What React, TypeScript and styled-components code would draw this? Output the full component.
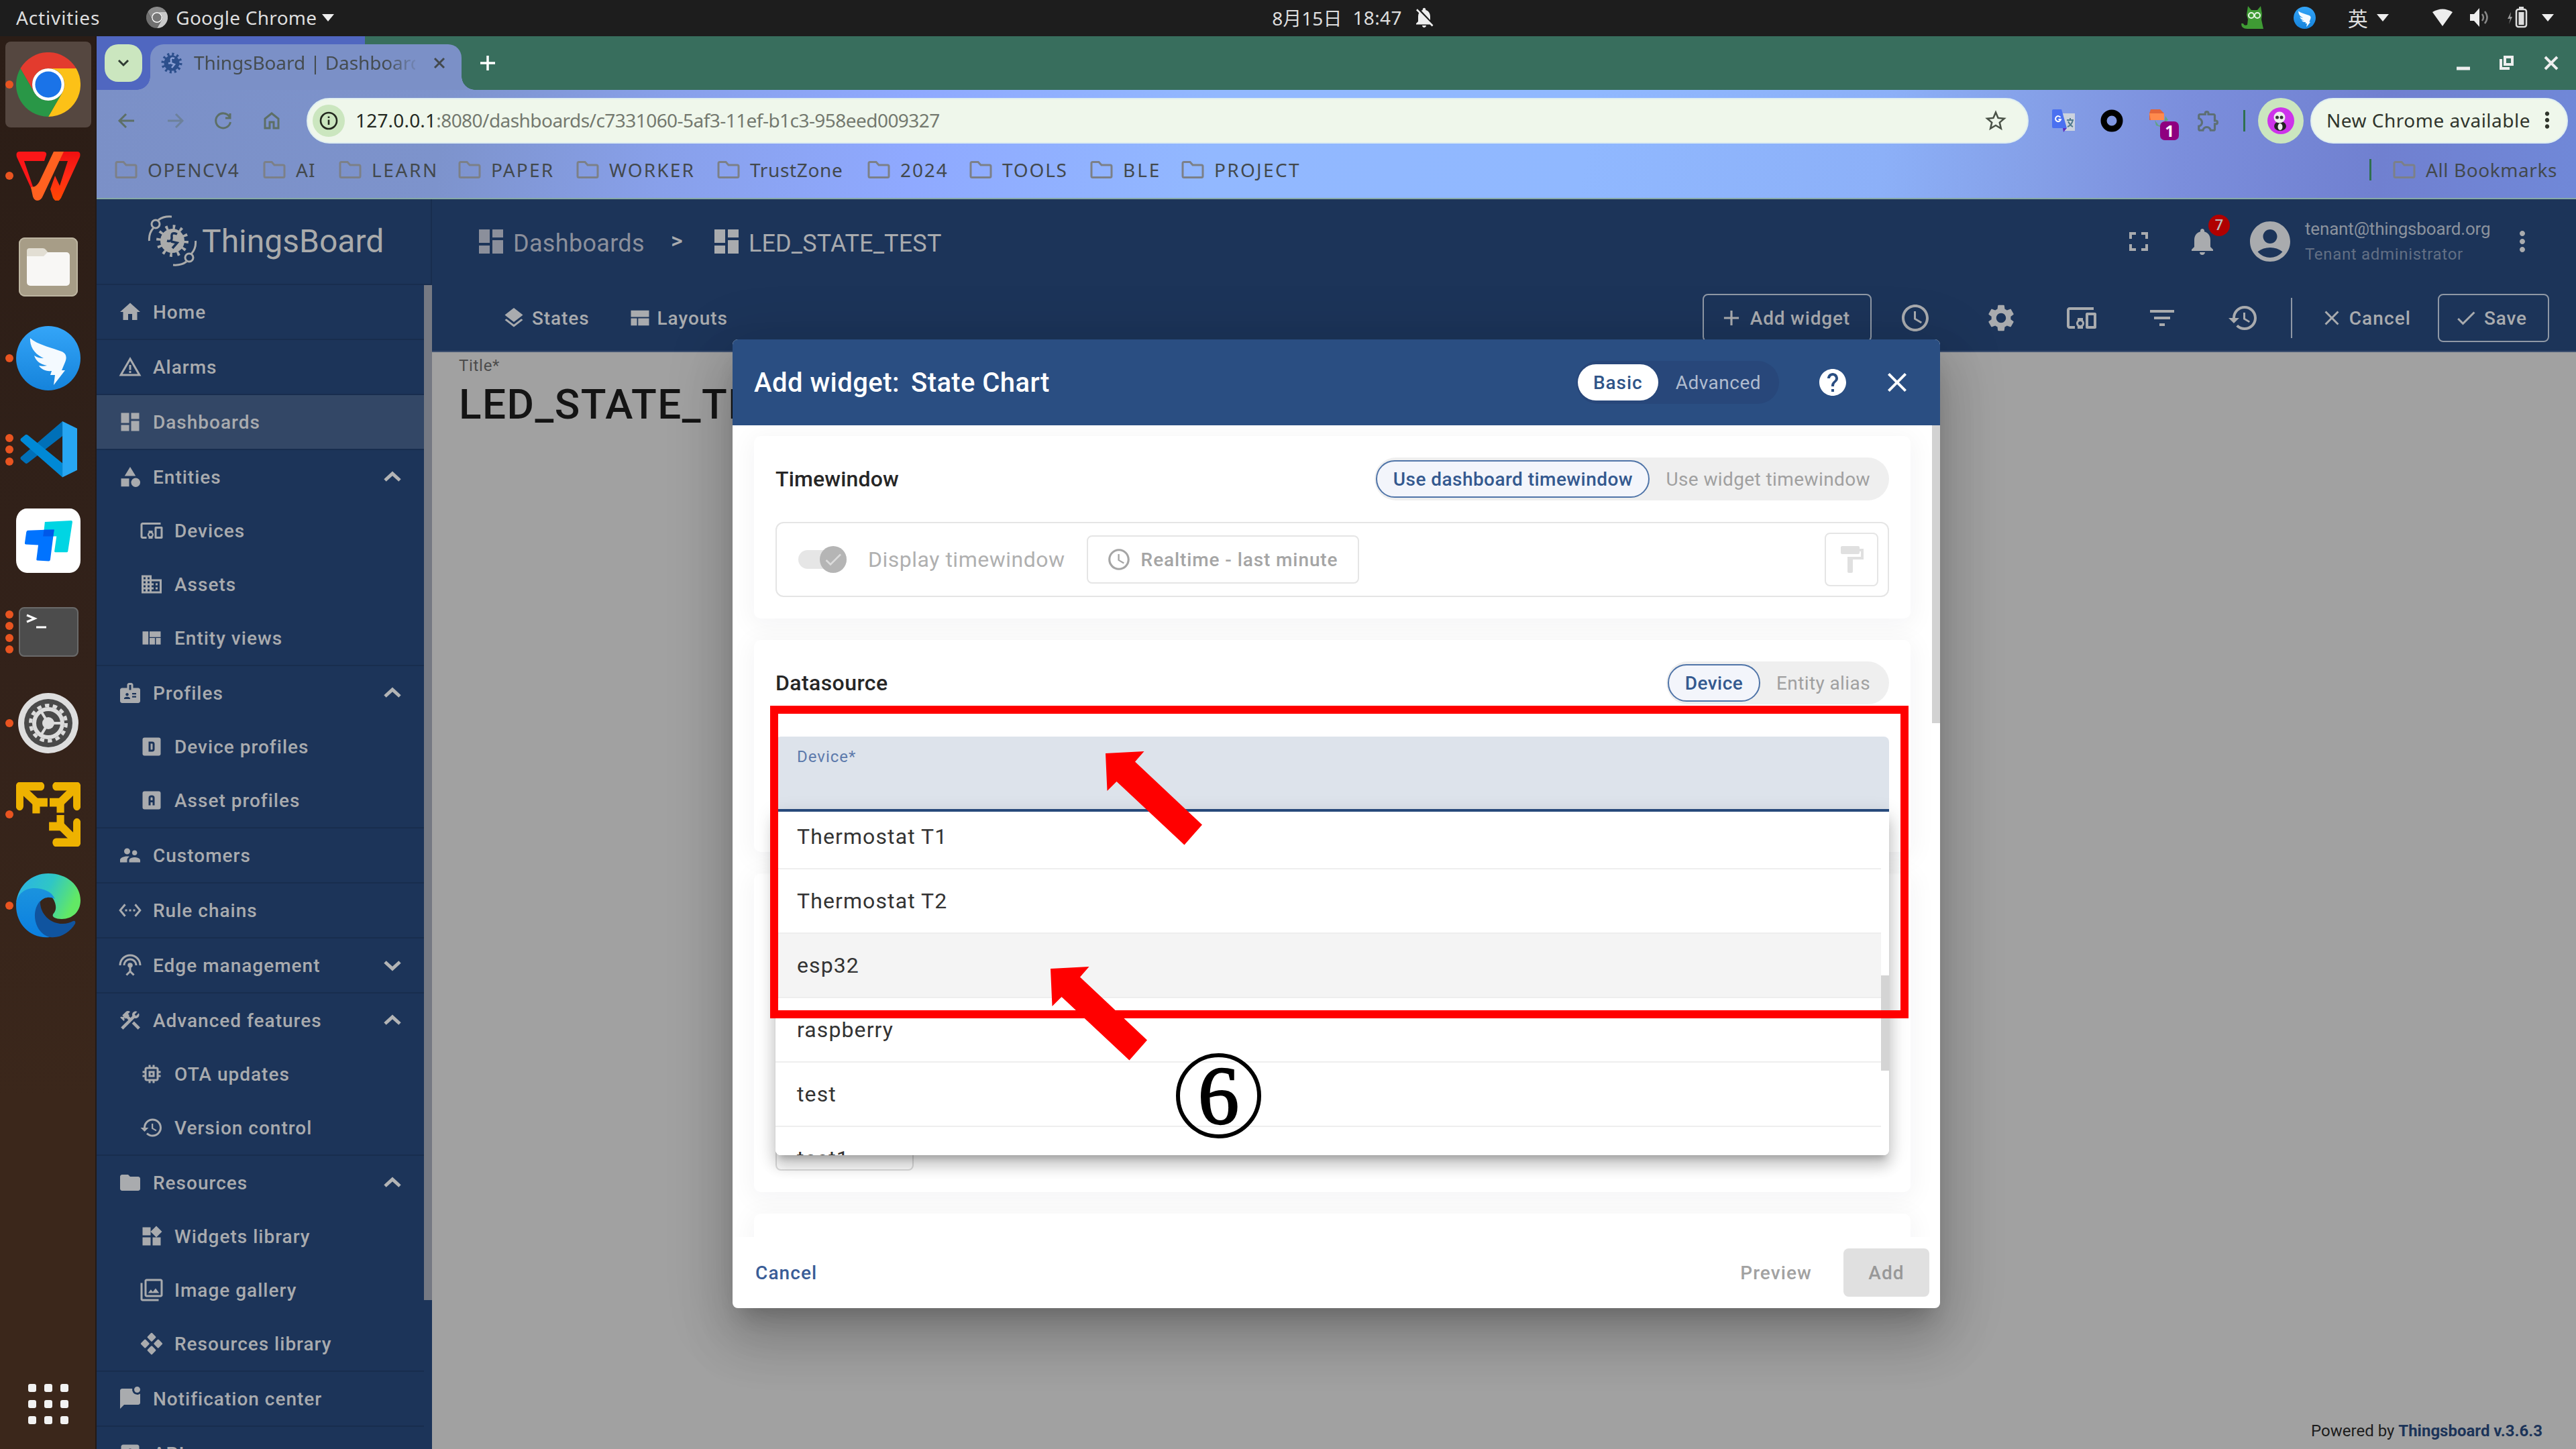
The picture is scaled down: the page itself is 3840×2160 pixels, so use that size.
import React from 'react';
import styled, { createGlobalStyle, css } from 'styled-components';
import {
  MdAccessTime, MdAccountCircle, MdAdd, MdBadge, MdCategory, MdCheck, MdClose, MdConstruction, MdDashboard,
  MdDevicesOther, MdDomain, MdFilter, MdFilterList, MdFolder, MdFormatPaint,
  MdFullscreen, MdHelp, MdHistory, MdHome, MdInsertChart, MdLayers, MdMarkChatUnread, MdMemory, MdMoreVert,
  MdNotifications, MdSettings, MdSettingsEthernet, MdSettingsInputAntenna, MdStarBorder, MdSupervisorAccount,
  MdWarningAmber, MdWidgets, MdOutlineExtension, MdNotificationsOff,
} from 'react-icons/md';

const GlobalStyle = createGlobalStyle`
  * { box-sizing: border-box; }
  html, body { margin: 0; padding: 0; }
  body { width: 3840px; height: 2160px; overflow: hidden; font-family: Roboto, "Noto Sans CJK SC", sans-serif; }
  svg { display: block; flex: none; }
`;

const chromeFont = css`font-family: "Noto Sans", "Noto Sans CJK SC", sans-serif; font-size: 28px;`;

const Screen = styled.div`
  position: relative; width: 3840px; height: 2160px; overflow: hidden;
  display: flex; flex-direction: column; background: #1d1d1d;
`;
const Text = styled.span<{ $ls?: number }>`white-space: pre; letter-spacing: ${p => p.$ls ?? 0}px;`;
const Space = styled.div<{ $w: number }>`width: ${p => p.$w}px; flex: none;`;
const Fill = styled.div`flex: 1;`;

/* ---------- system bar ---------- */
const SystemBar = styled.header`
  height: 54px; flex: none; display: flex; align-items: center; padding: 0 20px 2px 24px;
  background: #1d1d1d; color: #dedede; ${chromeFont}
`;
const InputMethod = styled.span`font-size: 30px;`;
const Caret = styled.i`
  border: 9px solid transparent; border-top: 11px solid #eee; border-bottom: 0; width: 0; height: 0; flex: none;
`;
const Desktop = styled.div`flex: 1; min-height: 0; display: flex;`;

/* ---------- dock ---------- */
const Dock = styled.nav`
  width: 144px; flex: none; padding: 4px 0 0; display: flex; flex-direction: column;
  background: linear-gradient(#2b1d16, #33221a 45%, #3b271b 75%, #3b271b); border-right: 2px solid #231a17;
`;
const DockSlot = styled.div<{ $active?: boolean }>`
  position: relative; height: 128px; margin: 4px 6px 4px 8px; border-radius: 8px;
  display: flex; align-items: center; justify-content: center;
  background: ${p => (p.$active ? '#554740' : 'transparent')};
`;
const DockDots = styled.div`
  position: absolute; left: 0; top: 0; bottom: 0; width: 12px;
  display: flex; flex-direction: column; justify-content: center; gap: 5.5px;
`;
const DockDot = styled.i`width: 12px; height: 12px; border-radius: 50%; background: #e95420;`;
const AppGrid = styled.div`
  margin: auto auto 37px 42px; display: grid; grid-template-columns: repeat(3, 12px); gap: 12px;
`;
const AppCell = styled.i`width: 12px; height: 12px; border-radius: 3px; background: #f2f2f2;`;

/* ---------- browser ---------- */
const Browser = styled.div`flex: 1; min-width: 0; display: flex; flex-direction: column;`;
const TabStrip = styled.div`
  height: 80px; flex: none; display: flex; align-items: flex-start; padding: 12px 26px 0 12px;
  background: linear-gradient(90deg, #5067c0 400px, #386e5d 400px); color: #454c50; ${chromeFont}
`;
const TabSearch = styled.div`
  width: 56px; height: 56px; border-radius: 20px; background: #cbe6bf; margin-right: 12px;
  display: flex; align-items: center; justify-content: center;
`;
const Tab = styled.div`
  position: relative; width: 464px; height: 68px; border-radius: 20px 20px 0 0; background: #7b90c7;
  display: flex; align-items: center; padding: 0 19px 12px 15px;
  &::before, &::after {
    content: ''; position: absolute; bottom: 0; width: 20px; height: 20px;
    background: radial-gradient(circle at 0 0, transparent 19.5px, #7b90c7 20px);
  }
  &::before { right: 100%; }
  &::after { left: 100%; transform: scaleX(-1); }
`;
const TabTitle = styled.div`
  width: 338px; margin: -2px 0 0 16px; overflow: hidden; white-space: nowrap; letter-spacing: -.1px;
  mask-image: linear-gradient(90deg, #000 285px, transparent 338px);
`;
const WindowButtons = styled.div`
  margin-left: auto; height: 56px; display: flex; align-items: center; gap: 44px;
`;
const BrowserChrome = styled.div`
  height: 163px; flex: none; border-bottom: 2px solid #86a9a6; color: #43494d; ${chromeFont}
  background: linear-gradient(96deg, #7b90c7 0, #7d93cc 14%, #88a0ea 23%, #8fa9ff 33%, #92b8ff 45%, #90b8ff 60%,
    #8cb0f8 72%, #85a0e8 78%, #7b8edc 84%, #7080d0 92%, #7088d8 100%);
`;
const AddressRow = styled.div`height: 92px; display: flex; align-items: center; padding: 0 12px 0 26px;`;
const NavButton = styled.div<{ $dim?: boolean }>`
  width: 72px; display: flex; padding-left: 5px; opacity: ${p => (p.$dim ? 0.45 : 1)};
`;
const Omnibox = styled.div`
  flex: 1; height: 68px; border-radius: 34px; background: #eff7eb; border: 2px solid #dfeef0; margin-left: -1px;
  display: flex; align-items: center; padding: 0 28px 0 7px; color: #74796f; white-space: pre;
`;
const Url = styled.div`padding-bottom: 2px;`;
const InfoBadge = styled.div`
  width: 48px; height: 48px; border-radius: 50%; background: #cbe6bf; margin-right: 16px;
  display: flex; align-items: center; justify-content: center;
`;
const Host = styled.b`font-weight: 400; color: #23281f; letter-spacing: .18px;`;
const ExtSlot = styled.div`
  position: relative; width: 72px; display: flex; align-items: center; justify-content: center;
`;
const ExtBadge = styled.span`
  position: absolute; left: 36px; top: 18px; width: 28px; height: 28px; border-radius: 7px; background: #8f0080;
  color: #fff; font: 700 24px/28px "Noto Sans", sans-serif; text-align: center;
`;
const Rule = styled.i<{ $h: number; $c: string; $w?: number }>`
  width: ${p => p.$w ?? 3}px; height: ${p => p.$h}px; background: ${p => p.$c}; flex: none;
`;
const Avatar = styled.div`
  width: 68px; height: 68px; border-radius: 50%; background: #cbe6bf; margin: 0 10px 0 19px;
  display: flex; align-items: center; justify-content: center;
`;
const UpdatePill = styled.div`
  width: 384px; height: 68px; border-radius: 34px; background: #eff7eb; border: 2px solid #dfeef0; color: #30352c;
  display: flex; align-items: center; padding: 0 0 2px 22px;
`;
const BookmarkRow = styled.div`height: 56px; display: flex; align-items: center; padding: 0 28px 2px 27px;`;
const Bookmark = styled.div<{ $w?: number }>`
  width: ${p => (p.$w ? p.$w + 'px' : 'auto')}; display: flex; align-items: center; gap: 15px;
`;

/* ---------- ThingsBoard page ---------- */
const Page = styled.div`flex: 1; min-height: 0; display: flex; background: #1c3459; color: #a9abae;`;
const Sidebar = styled.aside`width: 500px; flex: none; display: flex; flex-direction: column;`;
const Brand = styled.div`
  height: 128px; flex: none; display: flex; align-items: center; padding: 0 0 2px 76px;
  border-bottom: 2px solid #182d4e; border-right: 2px solid #182d4e; font-size: 48px; color: #aaabab;
`;
const MenuScroll = styled.div`flex: 1; min-height: 0; overflow: hidden; display: flex;`;
const Menu = styled.ul`list-style: none; margin: 0; padding: 0; width: 488px;`;
const ScrollThumb = styled.i<{ $h: number; $c: string }>`width: 12px; height: ${p => p.$h}px; background: ${p => p.$c};`;
const MenuSection = styled.li<{ $active?: boolean }>`
  border-bottom: 2px solid #182d4e; background: ${p => (p.$active ? '#334766' : 'transparent')};
`;
const MenuRow = styled.div<{ $sub?: boolean }>`
  height: 80px; display: flex; align-items: center; padding: 0 34px 0 ${p => (p.$sub ? 64 : 32)}px;
  font-size: 28px; font-weight: 500; letter-spacing: 1px; white-space: pre;
  > span { margin-left: 16px; flex: 1; }
`;

const Main = styled.main`flex: 1; min-width: 0; display: flex; flex-direction: column; background: #a1a1a1;`;
const TopRow = styled.div`
  height: 128px; flex: none; background: #1c3459; display: flex; align-items: center; padding: 0 56px 2px 64px;
`;
const Crumb = styled.div<{ $dim?: boolean }>`
  display: flex; align-items: center; font-size: 36px; color: ${p => (p.$dim ? '#8b8f9b' : '#a9abae')};
  > span { padding-top: 5px; margin-left: 9px; }
`;
const CrumbArrow = styled.span`width: 98px; padding: 0 0 5px 39px; font-size: 34px; font-weight: 500;`;
const BellWrap = styled.div`position: relative; margin: 0 41px 0 47px;`;
const BellBadge = styled.span`
  position: absolute; left: 33px; top: -16px; width: 32px; height: 32px; border-radius: 50%; background: #b00000;
  font-size: 22px; font-weight: 500; line-height: 32px; text-align: center; color: #bbb;
`;
const Account = styled.div`
  width: 300px; margin-left: 16px; display: flex; flex-direction: column; gap: 8px; line-height: 30px; white-space: nowrap;
`;
const AccountMail = styled.span`font-size: 26px; letter-spacing: -.17px; color: #8b929d;`;
const AccountRole = styled.span`font-size: 24px; letter-spacing: .68px; color: #626f84;`;
const ToolRow = styled.div`
  height: 100px; flex: none; background: #1c3459; border-bottom: 2px solid #3d506f; padding: 0 40px 0 104px;
  display: flex; align-items: center; font-size: 28px; font-weight: 500;
`;
const OutlineButton = styled.div<{ $w: number }>`
  width: ${p => p.$w}px; height: 72px; border: 2px solid #8f98a5; border-radius: 8px;
  display: flex; align-items: center; padding-left: 22px; gap: 9px;
`;
const ToolIcon = styled.div<{ $l: number }>`margin-left: ${p => p.$l}px;`;
const Workspace = styled.section`flex: 1; display: flex; flex-direction: column; padding: 6px 50px 11px 40px;`;
const FieldLabel = styled.div`font-size: 24px; line-height: 28px; letter-spacing: .7px; color: #4c4c4c;`;
const DashTitle = styled.div`
  margin-top: 4px; font-size: 62px; font-weight: 500; line-height: 80px; letter-spacing: 1.5px; color: #141414;
`;
const Powered = styled.div`
  margin: auto 0 0 auto; font-size: 24px; line-height: 32px; color: #1c1c1c;
  b { color: #1c3459; }
`;

/* ---------- dialog ---------- */
const Dialog = styled.section`
  position: absolute; isolation: isolate; left: 1092px; top: 506px; width: 1800px; height: 1444px; border-radius: 8px;
  background: #fff; display: flex; flex-direction: column;
  box-shadow: 0 22px 30px -14px rgba(0,0,0,.2), 0 48px 76px 6px rgba(0,0,0,.14), 0 18px 92px 16px rgba(0,0,0,.12);
`;
const DialogHead = styled.div`
  height: 128px; flex: none; background: #2a4e82; border-radius: 8px 8px 0 0; color: #fff;
  display: flex; align-items: center; padding: 0 40px 0 32px; font-size: 40px; font-weight: 500;
`;
const ModeToggle = styled.div`
  margin-left: auto; height: 64px; border-radius: 32px; background: #28477a; padding: 0 27px 0 2px;
  display: flex; align-items: center; font-size: 28px; color: #b0bccf; font-weight: 400;
`;
const ModePill = styled.div`
  width: 120px; height: 54px; border-radius: 27px; background: #fff; color: #2f5488; font-weight: 500;
  display: flex; align-items: center; justify-content: center; margin-right: 26px;
`;
const DialogBody = styled.div`flex: 1; min-height: 0; overflow: hidden; display: flex;`;
const Panels = styled.div`width: 1788px; padding: 16px 32px; display: flex; flex-direction: column; gap: 32px;`;
const Panel = styled.div<{ $h: number; $z?: number; $end?: boolean }>`
  position: relative; z-index: ${p => p.$z ?? 0}; height: ${p => p.$h}px; flex: none; padding: 32px; border-radius: 10px;
  background: #fff; display: flex; flex-direction: column; justify-content: ${p => (p.$end ? 'flex-end' : 'flex-start')};
  box-shadow: 0 6px 36px 6px rgba(20, 24, 50, .045);
`;
const PanelHead = styled.div`
  height: 64px; flex: none; display: flex; align-items: center; justify-content: space-between;
  font-size: 32px; font-weight: 500; color: #262626;
`;
const Toggle = styled.div`
  height: 64px; border-radius: 32px; background: #efefef; display: flex; align-items: center; padding: 0 28px 0 2px;
  font-size: 28px; font-weight: 400; letter-spacing: .4px; color: #a0a0a0; white-space: pre;
`;
const TogglePill = styled.div<{ $w: number }>`
  width: ${p => p.$w}px; height: 56px; border-radius: 28px; border: 2px solid #4f74a8; background: #f3f5fb; color: #34598f;
  font-weight: 500; letter-spacing: .45px; display: flex; align-items: center; justify-content: center; margin-right: 24px;
`;
const TimeBox = styled.div`
  height: 112px; margin-top: 32px; border: 2px solid #e5e5e5; border-radius: 12px; display: flex; align-items: center;
  padding: 0 14px 0 32px; font-size: 32px; color: #b0b0b0;
`;
const SwitchTrack = styled.div`
  width: 72px; height: 28px; border-radius: 14px; background: #e6e6e6; display: flex; align-items: center;
  justify-content: flex-end; margin-right: 32px;
`;
const SwitchKnob = styled.div`
  width: 40px; height: 40px; border-radius: 50%; background: #b5b5b5; color: #dcdcdc; flex: none;
  display: flex; align-items: center; justify-content: center;
`;
const RealtimeButton = styled.div`
  width: 406px; height: 72px; margin-left: 32px; border: 2px solid #e5e5e5; border-radius: 8px; color: #a5a5a5;
  font-size: 28px; font-weight: 500; display: flex; align-items: center; padding-left: 27px; gap: 14px;
`;
const PaintButton = styled.div`
  width: 80px; height: 80px; margin-left: auto; border: 2px solid #e5e5e5; border-radius: 8px; color: #e0e0e0;
  display: flex; align-items: center; justify-content: center;
`;
const DeviceField = styled.div`
  position: relative; height: 112px; margin-top: 48px; flex: none; border-radius: 8px 8px 0 0;
  border-bottom: 4px solid #2a4e82; background: #dde3eb;
  padding: 16px 32px; font-size: 24px; line-height: 28px; letter-spacing: 1px; color: #5c7aac;
`;
const OptionShadow = styled.div`
  position: absolute; left: 0; top: 112px; width: 1660px; height: 512px; border-radius: 0 0 8px 8px;
  box-shadow: 0 10px 10px -6px rgba(0,0,0,.2), 0 16px 20px 2px rgba(0,0,0,.14), 0 6px 28px 4px rgba(0,0,0,.12);
`;
const OptionPanel = styled.div`
  position: absolute; left: 0; top: 112px; width: 1660px; height: 512px; overflow: hidden; background: #fff;
  border-radius: 0 0 8px 8px; display: flex;
`;
const Options = styled.div`width: 1648px; margin-top: -10px;`;
const Option = styled.div<{ $hover?: boolean }>`
  height: 96px; border-bottom: 2px solid #eee; background: ${p => (p.$hover ? '#f4f4f4' : '#fff')};
  display: flex; align-items: center; padding-left: 32px; font-size: 32px; letter-spacing: 1.1px; color: #333;
`;
const OptionThumb = styled.i`width: 12px; height: 142px; margin-top: 244px; background: #d4d4d4;`;
const GhostButton = styled.div`width: 206px; height: 72px; border: 2px solid #dcdcdc; border-radius: 8px;`;
const DialogFoot = styled.div`
  height: 106px; flex: none; padding: 0 16px 0 34px; display: flex; align-items: center;
  font-size: 28px; font-weight: 500; letter-spacing: 1.1px; color: #a2a2a2;
`;
const CancelLink = styled.span`color: #3a5d97; margin-right: auto;`;
const AddButton = styled.div`
  width: 128px; height: 72px; margin-left: 47px; border-radius: 8px; background: #e0e0e0; color: #989898;
  display: flex; align-items: center; justify-content: center;
`;

/* ---------- annotations ---------- */
const RedFrame = styled.div`
  position: absolute; left: 1148px; top: 1052px; width: 1697px; height: 466px; border: 12px solid #f00;
`;
const Arrow = styled.svg<{ $x: number; $y: number }>`position: absolute; left: ${p => p.$x}px; top: ${p => p.$y}px;`;
const StepMark = styled.div`
  position: absolute; left: 1753px; top: 1570px; width: 127px; height: 127px; border: 6px solid #000; border-radius: 50%;
  display: flex; align-items: center; justify-content: center; color: #000;
  font: 122px/127px "Liberation Serif", serif; -webkit-text-stroke: 2.5px #000;
`;

/* ---------- drawn icons ---------- */
const Bird = ({ size }: { size: number }) => (
  <svg width={size} height={size} viewBox="0 0 96 96">
    <defs><linearGradient id="bird" x1="0" y1="0" x2="0" y2="1"><stop stopColor="#34a5f8" /><stop offset="1" stopColor="#1583db" /></linearGradient></defs>
    <circle cx="48" cy="48" r="48" fill="url(#bird)" />
    <path d="M21 18C32 28 50 31 68 38c7 3 8 9 5 16l-5 12h5L56 88l2-15h-7l2-6c-9 1-16-3-19-8 4 1 8 1 12 0-11-2-17-8-19-15 5 3 9 4 14 4C30 43 20 33 21 18z" fill="#f4faff" />
  </svg>
);
const ChromeLogo = ({ size, mono }: { size: number; mono?: boolean }) => (
  <svg width={size} height={size} viewBox="0 0 48 48">
    <path d="M24 12H44.8A24 24 0 0 0 3.2 12L13.6 30A12 12 0 0 1 24 12" fill={mono ? '#8a8a8a' : '#e33b2e'} />
    <path d="M44.8 12A24 24 0 0 1 24 48L34.4 30A12 12 0 0 0 24 12Z" fill={mono ? '#c9c9c9' : '#fcc117'} />
    <path d="M24 48A24 24 0 0 1 3.2 12L13.6 30A12 12 0 0 0 34.4 30Z" fill={mono ? '#707070' : '#299747'} />
    <circle cx="24" cy="24" r="12" fill="#fff" /><circle cx="24" cy="24" r="9.8" fill={mono ? '#777' : '#1a73e8'} />
  </svg>
);
const WpsLogo = () => (
  <svg width="96" height="74" viewBox="24 227 96 74">
    <defs><linearGradient id="wps" x1="0" y1="0" x2="0" y2="1"><stop stopColor="#f00f10" /><stop offset=".5" stopColor="#ff2a16" /><stop offset="1" stopColor="#ff4a00" /></linearGradient></defs>
    <path d="M29 228H64q6 0 5 5l-3 9H36l15 44 3-6 3 17q-3 3-5-2L25 236q-2-8 4-8z" fill="#fa1618" />
    <path d="M115 228H92l-4 14h13L89 279l-7-15-7 20 4 13q3 5 6 5t6-5l28-61q2-8-4-8z" fill="url(#wps)" />
    <path d="M80 228h15L64 294q-3 7-8 7t-7-6l-3-14 6-1q5-3 8-10z" fill="#ff6120" />
  </svg>
);
const FilesLogo = () => (
  <svg width="88" height="88" viewBox="0 0 88 88">
    <rect width="88" height="88" rx="9" fill="#a79d87" /><rect x="1" y="1" width="86" height="86" rx="8" fill="none" stroke="#bdb5a1" strokeWidth="2" />
    <path d="M12 20q0-4 4-4h20q3 0 5 3l3 4h28v14H12z" fill="#e2ded3" />
    <rect x="12" y="22" width="64" height="50" rx="5" fill="#f8f7f5" /><path d="M12 22h31l-6 6H12z" fill="#e2ded3" />
  </svg>
);
const VsCodeLogo = () => (
  <svg width="85" height="84" viewBox="66 133 190 165" preserveAspectRatio="none">
    <path d="M207 133V176L92 255q-6 4-10 0l-13-10q-4-4 0-8z" fill="#0070b8" />
    <path d="M207 297V256L92 174q-6-4-10 0l-13 9q-4 4 0 8z" fill="#0089d6" />
    <path d="M207 133L256 154V276L207 297z" fill="#27a6f2" />
  </svg>
);
const ToDeskLogo = () => (
  <svg width="96" height="96" viewBox="54 388 215 187" preserveAspectRatio="none">
    <rect x="54" y="388" width="215" height="187" rx="36" fill="#fff" />
    <path d="M150 427l88-4q4 0 4 4l-15 85q-1 3-4 3h-38q-4 0-3-4l7-42h-44z" fill="#00d5e3" />
    <path d="M93 452l88-3-13 88q-1 4-5 4l-38-2q-4 0-3-4l6-41-42-2q-4 0-3-4l5-31q1-5 5-5z" fill="#0073ff" />
    <path d="M147 450h34l-3 19h-34z" fill="#0058e8" />
  </svg>
);
const TerminalLogo = () => (
  <svg width="89" height="74" viewBox="0 0 89 74">
    <rect x="1" y="1" width="87" height="72" rx="7" fill="#4c4c4c" stroke="#6a6a6a" strokeWidth="2" />
    <path d="M12 12l12 5-12 5M26 30h15" fill="none" stroke="#fff" strokeWidth="3" />
  </svg>
);
const SettingsLogo = () => (
  <svg width="90" height="90" viewBox="0 0 90 90">
    <circle cx="45" cy="45" r="45" fill="#dedede" /><circle cx="45" cy="45" r="36" fill="#4a4a4a" />
    <circle cx="45" cy="45" r="21" fill="none" stroke="#dcdcdc" strokeWidth="6" />
    <circle cx="45" cy="45" r="26.5" fill="none" stroke="#dcdcdc" strokeWidth="5" strokeDasharray="6.5 5.4" />
    <circle cx="45" cy="45" r="9" fill="#dcdcdc" /><path d="M45 45H68M45 45L34 27M45 45L34 63" stroke="#dcdcdc" strokeWidth="4" />
  </svg>
);
const VmwareLogo = () => (
  <svg width="96" height="96" viewBox="54 1188 215 188" preserveAspectRatio="none">
    <g fill="none" stroke="#eeb200" strokeWidth="25" strokeLinejoin="round">
      <g strokeLinecap="round"><path d="M66 1258V1200H136" /><path d="M188 1200H257V1258" /><path d="M257 1306V1364H188" /></g>
      <path d="M74 1208L120 1246" /><path d="M250 1206L203 1246" /><path d="M250 1356L204 1316" />
      <path d="M121 1279V1247H159" /><path d="M166 1247H202V1277" /><path d="M202 1284V1317H164" />
    </g>
  </svg>
);
const EdgeLogo = () => (
  <svg width="96" height="96" viewBox="0 0 96 96">
    <defs>
      <linearGradient id="edgeTop" x1="0" y1="0" x2="1" y2=".35"><stop stopColor="#2ab0ea" /><stop offset=".55" stopColor="#2fc6c6" /><stop offset="1" stopColor="#62e865" /></linearGradient>
      <linearGradient id="edgeLeft" x1="0" y1="0" x2="0" y2="1"><stop stopColor="#1b93de" /><stop offset="1" stopColor="#0b7fe0" /></linearGradient>
    </defs>
    <path d="M0 44C3 18 23 0 48 0c28 0 48 18 48 40 0 17-12 28-28 28-9 0-15-3-13-7 2-3 5-6 4-13C57 32 40 24 28 24 14 24 4 32 0 44z" fill="url(#edgeTop)" />
    <path d="M0 48c0-16 12-26 27-26 14 0 26 5 31 16-7-4-17-3-22 4-10 15-4 38 14 53-27 3-50-18-50-47z" fill="url(#edgeLeft)" />
    <path d="M28 60c1-9 4-15 8-19-1 18 14 34 33 34 7 0 12-2 16-4 3-1 4 1 3 4C81 87 66 97 51 95 36 92 27 76 28 60z" fill="#10549f" />
  </svg>
);
const ThingsBoardMark = () => (
  <svg width="74" height="76" viewBox="219 322 74 76" fill="none" stroke="#aaabab" strokeWidth="3">
    <circle cx="256" cy="360" r="18" fill="#aaabab" stroke="none" />
    <circle cx="256" cy="360" r="20.500" strokeWidth="7" strokeDasharray="3.600 7.130" />
    <path d="M263 350q-9-4-8 4t-7 6M254 361l9 2-7 8" stroke="#1c3459" strokeWidth="3.500" />
    <circle cx="231" cy="335" r="6" /><path d="M221.500 360q-1-11 6-19M235 329q8-6 20-5" />
    <circle cx="281" cy="385" r="6" /><path d="M290.500 360q1 11-6 19M277 391q-8 6-20 5" />
  </svg>
);
const Favicon = () => (
  <svg width="34" height="34" viewBox="0 0 34 34" fill="none" stroke="#2c4f8c">
    <circle cx="17" cy="17" r="11.500" fill="#2c4f8c" stroke="none" /><circle cx="17" cy="17" r="13" strokeWidth="5" strokeDasharray="3 3.800" />
    <path d="M21 10q-6-2-5 3t-4 4M16 17l5 2-4 5" stroke="#8ba0d4" strokeWidth="2.500" />
  </svg>
);
const Chevron = ({ down }: { down?: boolean }) => (
  <svg width="26" height="18" viewBox="0 0 26 18" fill="none" stroke="#b3b4b5" strokeWidth="5"><path d={down ? 'M2 4L13 14L24 4' : 'M2 14L13 4L24 14'} /></svg>
);
const ViewQuilt = ({ size }: { size: number }) => (
  <svg width={size} height={size} viewBox="0 0 24 24" fill="currentColor"><path d="M10 18.500h5.300V12H10zM3 18.500h5.800V5.500H3zM16.300 18.500H21V12h-4.700zM10 5.500v5.600h11V5.500z" /></svg>
);
const LetterBox = ({ letter }: { letter: 'D' | 'A' }) => (
  <svg width="36" height="36" viewBox="0 0 24 24">
    <rect x="3" y="3" width="18" height="18" rx="2" fill="currentColor" />
    <path d={letter === 'D' ? 'M10 8h2.500q1.500 0 1.500 1.500v5q0 1.500-1.500 1.500H10z' : 'M10 17V9.500Q10 8 12 8t2 1.500V17M10 13h4'} fill="none" stroke="#1c3459" strokeWidth="2" />
  </svg>
);
const Diamonds = () => (
  <svg width="36" height="36" viewBox="0 0 24 24" fill="currentColor">
    {[[12, 5.5], [5.5, 12], [18.5, 12], [12, 18.5]].map(([x, y]) => (
      <rect key={`${x}-${y}`} x={x - 3.3} y={y - 3.3} width="6.600" height="6.600" rx="1" transform={`rotate(45 ${x} ${y})`} />
    ))}
  </svg>
);
const LayoutIcon = () => (
  <svg width="36" height="36" viewBox="0 0 24 24" fill="currentColor"><path d="M3 4.500h18v6.500H3zM3 12.300h6v7.200H3zM10.200 12.300H21v7.200H10.200z" /></svg>
);
const FolderOutline = () => (
  <svg width="34" height="28" viewBox="0 0 34 28" fill="none" stroke="#7c8087" strokeWidth="3"><path d="M2 23.500V4.500q0-2 2-2h9l4 4.500h13q2 0 2 2v14.500q0 2-2 2H4q-2 0-2-2z" /></svg>
);
const Stroke = ({ d, size = 28, c = '#5d6f66', w = 3 }: { d: string; size?: number; c?: string; w?: number }) => (
  <svg width={size} height={size} viewBox="0 0 28 28" fill="none" stroke={c} strokeWidth={w}><path d={d} /></svg>
);

const bookmarks: [string, number, number][] = [
  ['OPENCV4', 221, 1.6], ['AI', 113, 1.2], ['LEARN', 178, 2.6], ['PAPER', 176, 2.2], ['WORKER', 210, 2.1],
  ['TrustZone', 224, 0.65], ['2024', 152, 1.9], ['TOOLS', 180, 1.8], ['BLE', 136, 3], ['PROJECT', 200, 2.3],
];

type Entry = { icon: React.ReactNode; label: string };
type Section = Entry & { open?: boolean; closed?: boolean; active?: boolean; items?: Entry[] };
const menu: Section[] = [
  { icon: <MdHome size={36} />, label: 'Home' },
  { icon: <MdWarningAmber size={36} />, label: 'Alarms' },
  { icon: <MdDashboard size={36} />, label: 'Dashboards', active: true },
  { icon: <MdCategory size={36} />, label: 'Entities', open: true, items: [
    { icon: <MdDevicesOther size={36} />, label: 'Devices' },
    { icon: <MdDomain size={36} />, label: 'Assets' },
    { icon: <ViewQuilt size={36} />, label: 'Entity views' }] },
  { icon: <MdBadge size={36} />, label: 'Profiles', open: true, items: [
    { icon: <LetterBox letter="D" />, label: 'Device profiles' },
    { icon: <LetterBox letter="A" />, label: 'Asset profiles' }] },
  { icon: <MdSupervisorAccount size={36} />, label: 'Customers' },
  { icon: <MdSettingsEthernet size={36} />, label: 'Rule chains' },
  { icon: <MdSettingsInputAntenna size={36} />, label: 'Edge management', closed: true },
  { icon: <MdConstruction size={36} />, label: 'Advanced features', open: true, items: [
    { icon: <MdMemory size={36} />, label: 'OTA updates' },
    { icon: <MdHistory size={36} />, label: 'Version control' }] },
  { icon: <MdFolder size={36} />, label: 'Resources', open: true, items: [
    { icon: <MdWidgets size={36} />, label: 'Widgets library' },
    { icon: <MdFilter size={36} />, label: 'Image gallery' },
    { icon: <Diamonds />, label: 'Resources library' }] },
  { icon: <MdMarkChatUnread size={36} />, label: 'Notification center' },
  { icon: <MdInsertChart size={36} />, label: 'API usage' },
];

const dock: { icon: React.ReactNode; dots: number; active?: boolean }[] = [
  { icon: <ChromeLogo size={96} />, dots: 1, active: true },
  { icon: <WpsLogo />, dots: 1 }, { icon: <FilesLogo />, dots: 0 }, { icon: <Bird size={96} />, dots: 1 },
  { icon: <VsCodeLogo />, dots: 3 }, { icon: <ToDeskLogo />, dots: 0 }, { icon: <TerminalLogo />, dots: 4 },
  { icon: <SettingsLogo />, dots: 1 }, { icon: <VmwareLogo />, dots: 1 }, { icon: <EdgeLogo />, dots: 1 },
];

const options = ['Thermostat T1', 'Thermostat T2', 'esp32', 'raspberry', 'test', 'test1'];
const arrowPoints = '0,3 57.5,0 44,15.5 144,109.5 117.5,139.5 16.5,45 2.5,59';

export default function App() {
  return (
    <Screen>
      <GlobalStyle />
      <SystemBar>
        <Text $ls={0.86}>Activities</Text><Space $w={69} />
        <ChromeLogo size={32} mono /><Space $w={12} /><Text $ls={0.26}>Google Chrome</Text><Space $w={8} /><Caret />
        <Space $w={1398} />
        <Text>8月15日</Text><Space $w={16} /><Text $ls={0.36}>18:47</Text><Space $w={15} />
        <MdNotificationsOff size={36} color="#eee" />
        <Space $w={1199} />
        <svg width="36" height="34" viewBox="0 0 36 34">
          <path d="M11 0l5 6h9l5-6 2 12-1 8 3 14H10q-9 0-9-8h3q1 4 6 2l1-8-2-7z" fill="#3f9b34" />
          <circle cx="16" cy="14" r="4" fill="#3f9b34" stroke="#e6f5e4" strokeWidth="2" /><circle cx="25" cy="14" r="4" fill="#3f9b34" stroke="#e6f5e4" strokeWidth="2" />
        </svg>
        <Space $w={43} /><Bird size={33} /><Space $w={48} />
        <InputMethod>英</InputMethod><Space $w={13} /><Caret /><Space $w={65} />
        <svg width="30" height="26" viewBox="0 0 30 26"><path d="M0 5Q15-4 30 5L15 26z" fill="#eee" /></svg>
        <Space $w={26} />
        <svg width="30" height="28" viewBox="0 0 30 28"><path d="M0 9h6l8-9v28l-8-9H0z" fill="#eee" /><path d="M18 9q4 5 0 10M22 5q7 9 0 18" stroke="#888" strokeWidth="2.500" fill="none" /></svg>
        <Space $w={26} />
        <svg width="30" height="32" viewBox="0 0 30 32"><path d="M5 8L0 18h4l-2 8 5-11H4z" fill="#999" /><rect x="13" y="4" width="15" height="26" rx="3" fill="none" stroke="#ddd" strokeWidth="2.500" /><rect x="16.500" y="8" width="8" height="19" fill="#ddd" /><rect x="17" y="0" width="7" height="4" fill="#ddd" /></svg>
        <Space $w={21} /><Caret />
      </SystemBar>
      <Desktop>
        <Dock>
          {dock.map((d, i) => (
            <DockSlot key={i} $active={d.active}>
              {d.icon}
              <DockDots>{Array.from({ length: d.dots }, (_, k) => <DockDot key={k} />)}</DockDots>
            </DockSlot>
          ))}
          <AppGrid>{Array.from({ length: 9 }, (_, k) => <AppCell key={k} />)}</AppGrid>
        </Dock>
        <Browser>
          <TabStrip>
            <TabSearch><Stroke d="M7 10l7 7 7-7" c="#2f3b33" w={3} /></TabSearch>
            <Tab><Favicon /><TabTitle>ThingsBoard | Dashboards</TabTitle><Space $w={22} /><Stroke d="M7 7L21 21M21 7L7 21" c="#43494d" size={28} /></Tab>
            <Space $w={28} />
            <svg width="22" height="56" viewBox="0 0 22 56" stroke="#fff" strokeWidth="3.500"><path d="M0 28H22M11 17V39" /></svg>
            <WindowButtons>
              <svg width="20" height="22" viewBox="0 0 20 22"><path d="M0 19h20" stroke="#eee" strokeWidth="5" /></svg>
              <svg width="22" height="22" viewBox="0 0 22 22" fill="none" stroke="#eee" strokeWidth="4"><path d="M8 2h11v11H8zM2 5v14h13" /></svg>
              <svg width="22" height="22" viewBox="0 0 22 22" stroke="#eee" strokeWidth="4"><path d="M2 2L20 20M20 2L2 20" /></svg>
            </WindowButtons>
          </TabStrip>
          <BrowserChrome>
            <AddressRow>
              <NavButton><Stroke d="M25 14H4M13 4L3 14L13 24" /></NavButton>
              <NavButton $dim><Stroke d="M3 14H24M15 4L25 14L15 24" /></NavButton>
              <NavButton><Stroke d="M23 8A11 11 0 1 0 24.500 16M24 3V10H17" /></NavButton>
              <NavButton><Stroke d="M4 25V11L14 3L24 11V25H17V16H11V25Z" /></NavButton>
              <Omnibox>
                <InfoBadge>
                  <svg width="28" height="28" viewBox="0 0 28 28" fill="none" stroke="#23281f" strokeWidth="2.600"><circle cx="14" cy="14" r="12" /><path d="M14 12.500V20M14 7.500V10" /></svg>
                </InfoBadge>
                <Url><Host>127.0.0.1</Host><Text $ls={-0.55}>:8080/dashboards/c7331060-5af3-11ef-b1c3-958eed009327</Text></Url>
                <Fill /><MdStarBorder size={38} color="#4a5247" />
              </Omnibox>
              <Space $w={16} />
              <ExtSlot>
                <svg width="34" height="34" viewBox="0 0 34 34"><path d="M16 6h18v26H18z" fill="#ccd3de" /><path d="M2 0h12l8 28H2q-2 0-2-2V2q0-2 2-2z" fill="#4a70f0" /><path d="M16 28h6l-5 6z" fill="#5a2fc0" /><path d="M12.500 12A4 4 0 1 0 13 15H9.500" fill="none" stroke="#fff" strokeWidth="2" /><path d="M22 16h10M27 13v3M31 16q-2 8-8 10M24 18q3 6 7 8" stroke="#4f7a8d" strokeWidth="2" fill="none" /></svg>
              </ExtSlot>
              <ExtSlot><svg width="34" height="34" viewBox="0 0 34 34"><circle cx="17" cy="17" r="12" fill="none" stroke="#000" strokeWidth="9" /></svg></ExtSlot>
              <ExtSlot>
                <svg width="32" height="34" viewBox="0 0 32 34"><path d="M2 0h14l6 6v10H0V6z" fill="#e2653a" /><path d="M0 6h22v10H2z" fill="#ff8a4d" /><path d="M8 16l6 8 8-2v6l4 4-2 2-8-8-6-2zM24 10l4 6-6 4z" fill="#63a386" /></svg>
                <ExtBadge>1</ExtBadge>
              </ExtSlot>
              <ExtSlot><MdOutlineExtension size={38} color="#5d6f75" /></ExtSlot>
              <Space $w={16} /><Rule $h={32} $c="#2f7050" />
              <Avatar>
                <svg width="40" height="40" viewBox="0 0 40 40"><circle cx="20" cy="20" r="20" fill="#cd33ea" /><ellipse cx="19" cy="28" rx="9" ry="7" fill="#222" /><ellipse cx="19" cy="29" rx="3.500" ry="5" fill="#eee" /><circle cx="18" cy="15" r="8.500" fill="#eee" /><circle cx="14.500" cy="15" r="2.500" fill="#333" /><circle cx="21" cy="15" r="2.500" fill="#333" /></svg>
              </Avatar>
              <UpdatePill>
                <Text $ls={0.5}>New Chrome available</Text><Space $w={6} /><MdMoreVert size={38} color="#30352c" />
              </UpdatePill>
            </AddressRow>
            <BookmarkRow>
              {bookmarks.map(([name, w, ls]) => <Bookmark key={name} $w={w}><FolderOutline /><Text $ls={ls}>{name}</Text></Bookmark>)}
              <Fill />
              <Rule $h={32} $c="#2f7050" /><Space $w={32} />
              <Bookmark><FolderOutline /><Text $ls={0.58}>All Bookmarks</Text></Bookmark>
            </BookmarkRow>
          </BrowserChrome>
          <Page>
            <Sidebar>
              <Brand><ThingsBoardMark /><Space $w={7} /><Text>ThingsBoard</Text></Brand>
              <MenuScroll>
                <Menu>
                  {menu.map(s => (
                    <MenuSection key={s.label} $active={s.active}>
                      <MenuRow>{s.icon}<span>{s.label}</span>
                        {s.open && <Chevron />}
                        {s.closed && <Chevron down />}
                      </MenuRow>
                      {s.items?.map(e => <MenuRow key={e.label} $sub>{e.icon}<span>{e.label}</span></MenuRow>)}
                    </MenuSection>
                  ))}
                </Menu>
                <ScrollThumb $h={1513} $c="#757983" />
              </MenuScroll>
            </Sidebar>
            <Main>
              <TopRow>
                <Crumb $dim><MdDashboard size={48} /><Text $ls={0.32}>Dashboards</Text></Crumb>
                <CrumbArrow>&gt;</CrumbArrow>
                <Crumb><MdDashboard size={48} /><Text $ls={0.16}>LED_STATE_TEST</Text></Crumb>
                <Fill />
                <MdFullscreen size={48} />
                <BellWrap><MdNotifications size={48} /><BellBadge>7</BellBadge></BellWrap>
                <MdAccountCircle size={72} />
                <Account><AccountMail>tenant@thingsboard.org</AccountMail><AccountRole>Tenant administrator</AccountRole></Account>
                <MdMoreVert size={48} />
              </TopRow>
              <ToolRow>
                <MdLayers size={36} /><Space $w={9} /><Text $ls={0.9}>States</Text><Space $w={57} />
                <LayoutIcon /><Space $w={8} /><Text $ls={0.95}>Layouts</Text>
                <Fill />
                <OutlineButton $w={252}><MdAdd size={38} /><Text $ls={0.82}>Add widget</Text></OutlineButton>
                <ToolIcon $l={41}><MdAccessTime size={48} /></ToolIcon>
                <ToolIcon $l={80}><MdSettings size={48} /></ToolIcon>
                <ToolIcon $l={72}><MdDevicesOther size={48} /></ToolIcon>
                <ToolIcon $l={72}><MdFilterList size={48} /></ToolIcon>
                <ToolIcon $l={73}><MdHistory size={48} /></ToolIcon>
                <Space $w={47} /><Rule $h={60} $c="#8f98a5" $w={2} /><Space $w={41} />
                <MdClose size={36} /><Space $w={8} /><Text $ls={1.09}>Cancel</Text><Space $w={40} />
                <OutlineButton $w={166}><MdCheck size={36} /><Text $ls={0.82}>Save</Text></OutlineButton>
              </ToolRow>
              <Workspace>
                <FieldLabel>Title*</FieldLabel>
                <DashTitle>LED_STATE_TEST</DashTitle>
                <Powered>Powered by <b>Thingsboard v.3.6.3</b></Powered>
              </Workspace>
            </Main>
          </Page>
        </Browser>
      </Desktop>

      <Dialog>
        <DialogHead>
          <Text $ls={0.46}>Add widget:</Text><Space $w={17} /><Text $ls={0.42}>State Chart</Text>
          <ModeToggle><ModePill><Text $ls={0.9}>Basic</Text></ModePill><Text $ls={0.48}>Advanced</Text></ModeToggle>
          <Space $w={56} /><MdHelp size={48} /><Space $w={48} /><MdClose size={48} />
        </DialogHead>
        <DialogBody>
          <Panels>
            <Panel $h={272}>
              <PanelHead>
                <Text $ls={0.16}>Timewindow</Text>
                <Toggle><TogglePill $w={408}>Use dashboard timewindow</TogglePill>Use widget timewindow</Toggle>
              </PanelHead>
              <TimeBox>
                <SwitchTrack><SwitchKnob><MdCheck size={32} /></SwitchKnob></SwitchTrack>
                <Text $ls={0.51}>Display timewindow</Text>
                <RealtimeButton><MdAccessTime size={38} /><Text $ls={0.9}>Realtime - last minute</Text></RealtimeButton>
                <PaintButton><MdFormatPaint size={48} /></PaintButton>
              </TimeBox>
            </Panel>
            <Panel $h={316} $z={2}>
              <PanelHead>
                <Text $ls={0.42}>Datasource</Text>
                <Toggle><TogglePill $w={138}>Device</TogglePill>Entity alias</Toggle>
              </PanelHead>
              <DeviceField>
                Device*
                <OptionShadow />
                <OptionPanel>
                  <Options>{options.map(o => <Option key={o} $hover={o === 'esp32'}>{o}</Option>)}</Options>
                  <OptionThumb />
                </OptionPanel>
              </DeviceField>
            </Panel>
            <Panel $h={475} $end><GhostButton /></Panel>
            <Panel $h={300} />
          </Panels>
          <ScrollThumb $h={444} $c="#d2d2d2" />
        </DialogBody>
        <DialogFoot>
          <CancelLink>Cancel</CancelLink><span>Preview</span><AddButton>Add</AddButton>
        </DialogFoot>
      </Dialog>

      <RedFrame />
      <Arrow $x={1647.5} $y={1119.5} width="145" height="140" viewBox="0 0 145 140"><polygon points={arrowPoints} fill="#f00" /></Arrow>
      <Arrow $x={1566} $y={1441} width="145" height="140" viewBox="0 0 145 140"><polygon points={arrowPoints} fill="#f00" /></Arrow>
      <StepMark>6</StepMark>
    </Screen>
  );
}
